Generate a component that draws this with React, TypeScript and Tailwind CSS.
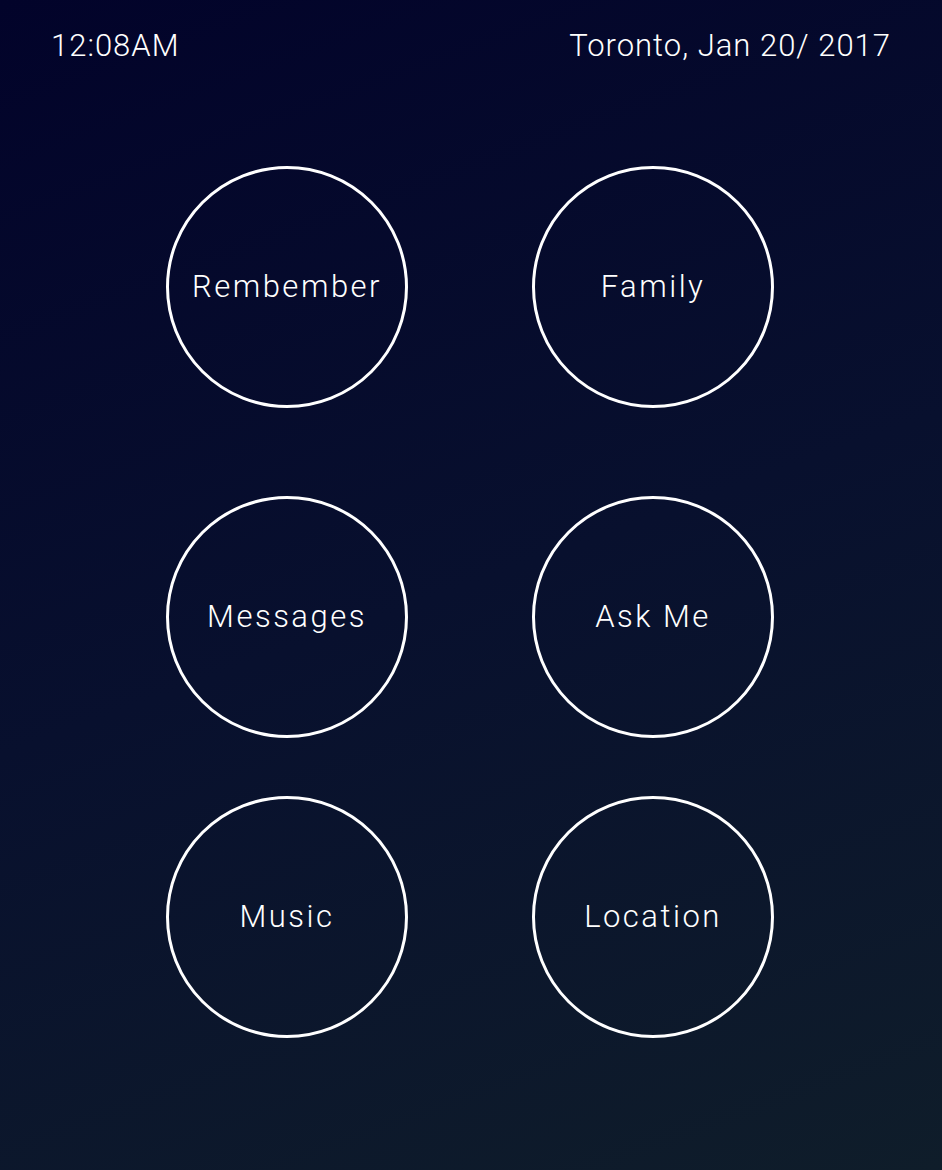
const tiles = [
  ['Rembember', 'Family'],
  ['Messages', 'Ask Me'],
  ['Music', 'Location'],
];

function Circle({ label }: { label: string }) {
  return (
    <button
      type="button"
      className="w-[242px] h-[242px] rounded-full border-[3px] border-white flex items-center justify-center text-white text-[31px] font-light tracking-[2.5px]"
    >
      {label}
    </button>
  );
}

export default function App() {
  return (
    <main
      className="w-[942px] h-[1170px] bg-[linear-gradient(160deg,#02032a_0%,#08102e_50%,#0f1d2a_100%)] text-white flex flex-col"
      style={{ fontFamily: 'Roboto, "Noto Sans", sans-serif' }}
    >
      <header className="flex justify-between items-center px-[51px] pt-[26px] h-[66px] text-[31px] font-light tracking-[1px]">
        <span>12:08AM</span>
        <span>Toronto, Jan 20/ 2017</span>
      </header>

      <div className="flex flex-col pl-[166px] mt-[100px]">
        <div className="flex gap-[124px]">
          <Circle label={tiles[0][0]} />
          <Circle label={tiles[0][1]} />
        </div>
        <div className="flex gap-[124px] mt-[88px]">
          <Circle label={tiles[1][0]} />
          <Circle label={tiles[1][1]} />
        </div>
        <div className="flex gap-[124px] mt-[58px]">
          <Circle label={tiles[2][0]} />
          <Circle label={tiles[2][1]} />
        </div>
      </div>
    </main>
  );
}
